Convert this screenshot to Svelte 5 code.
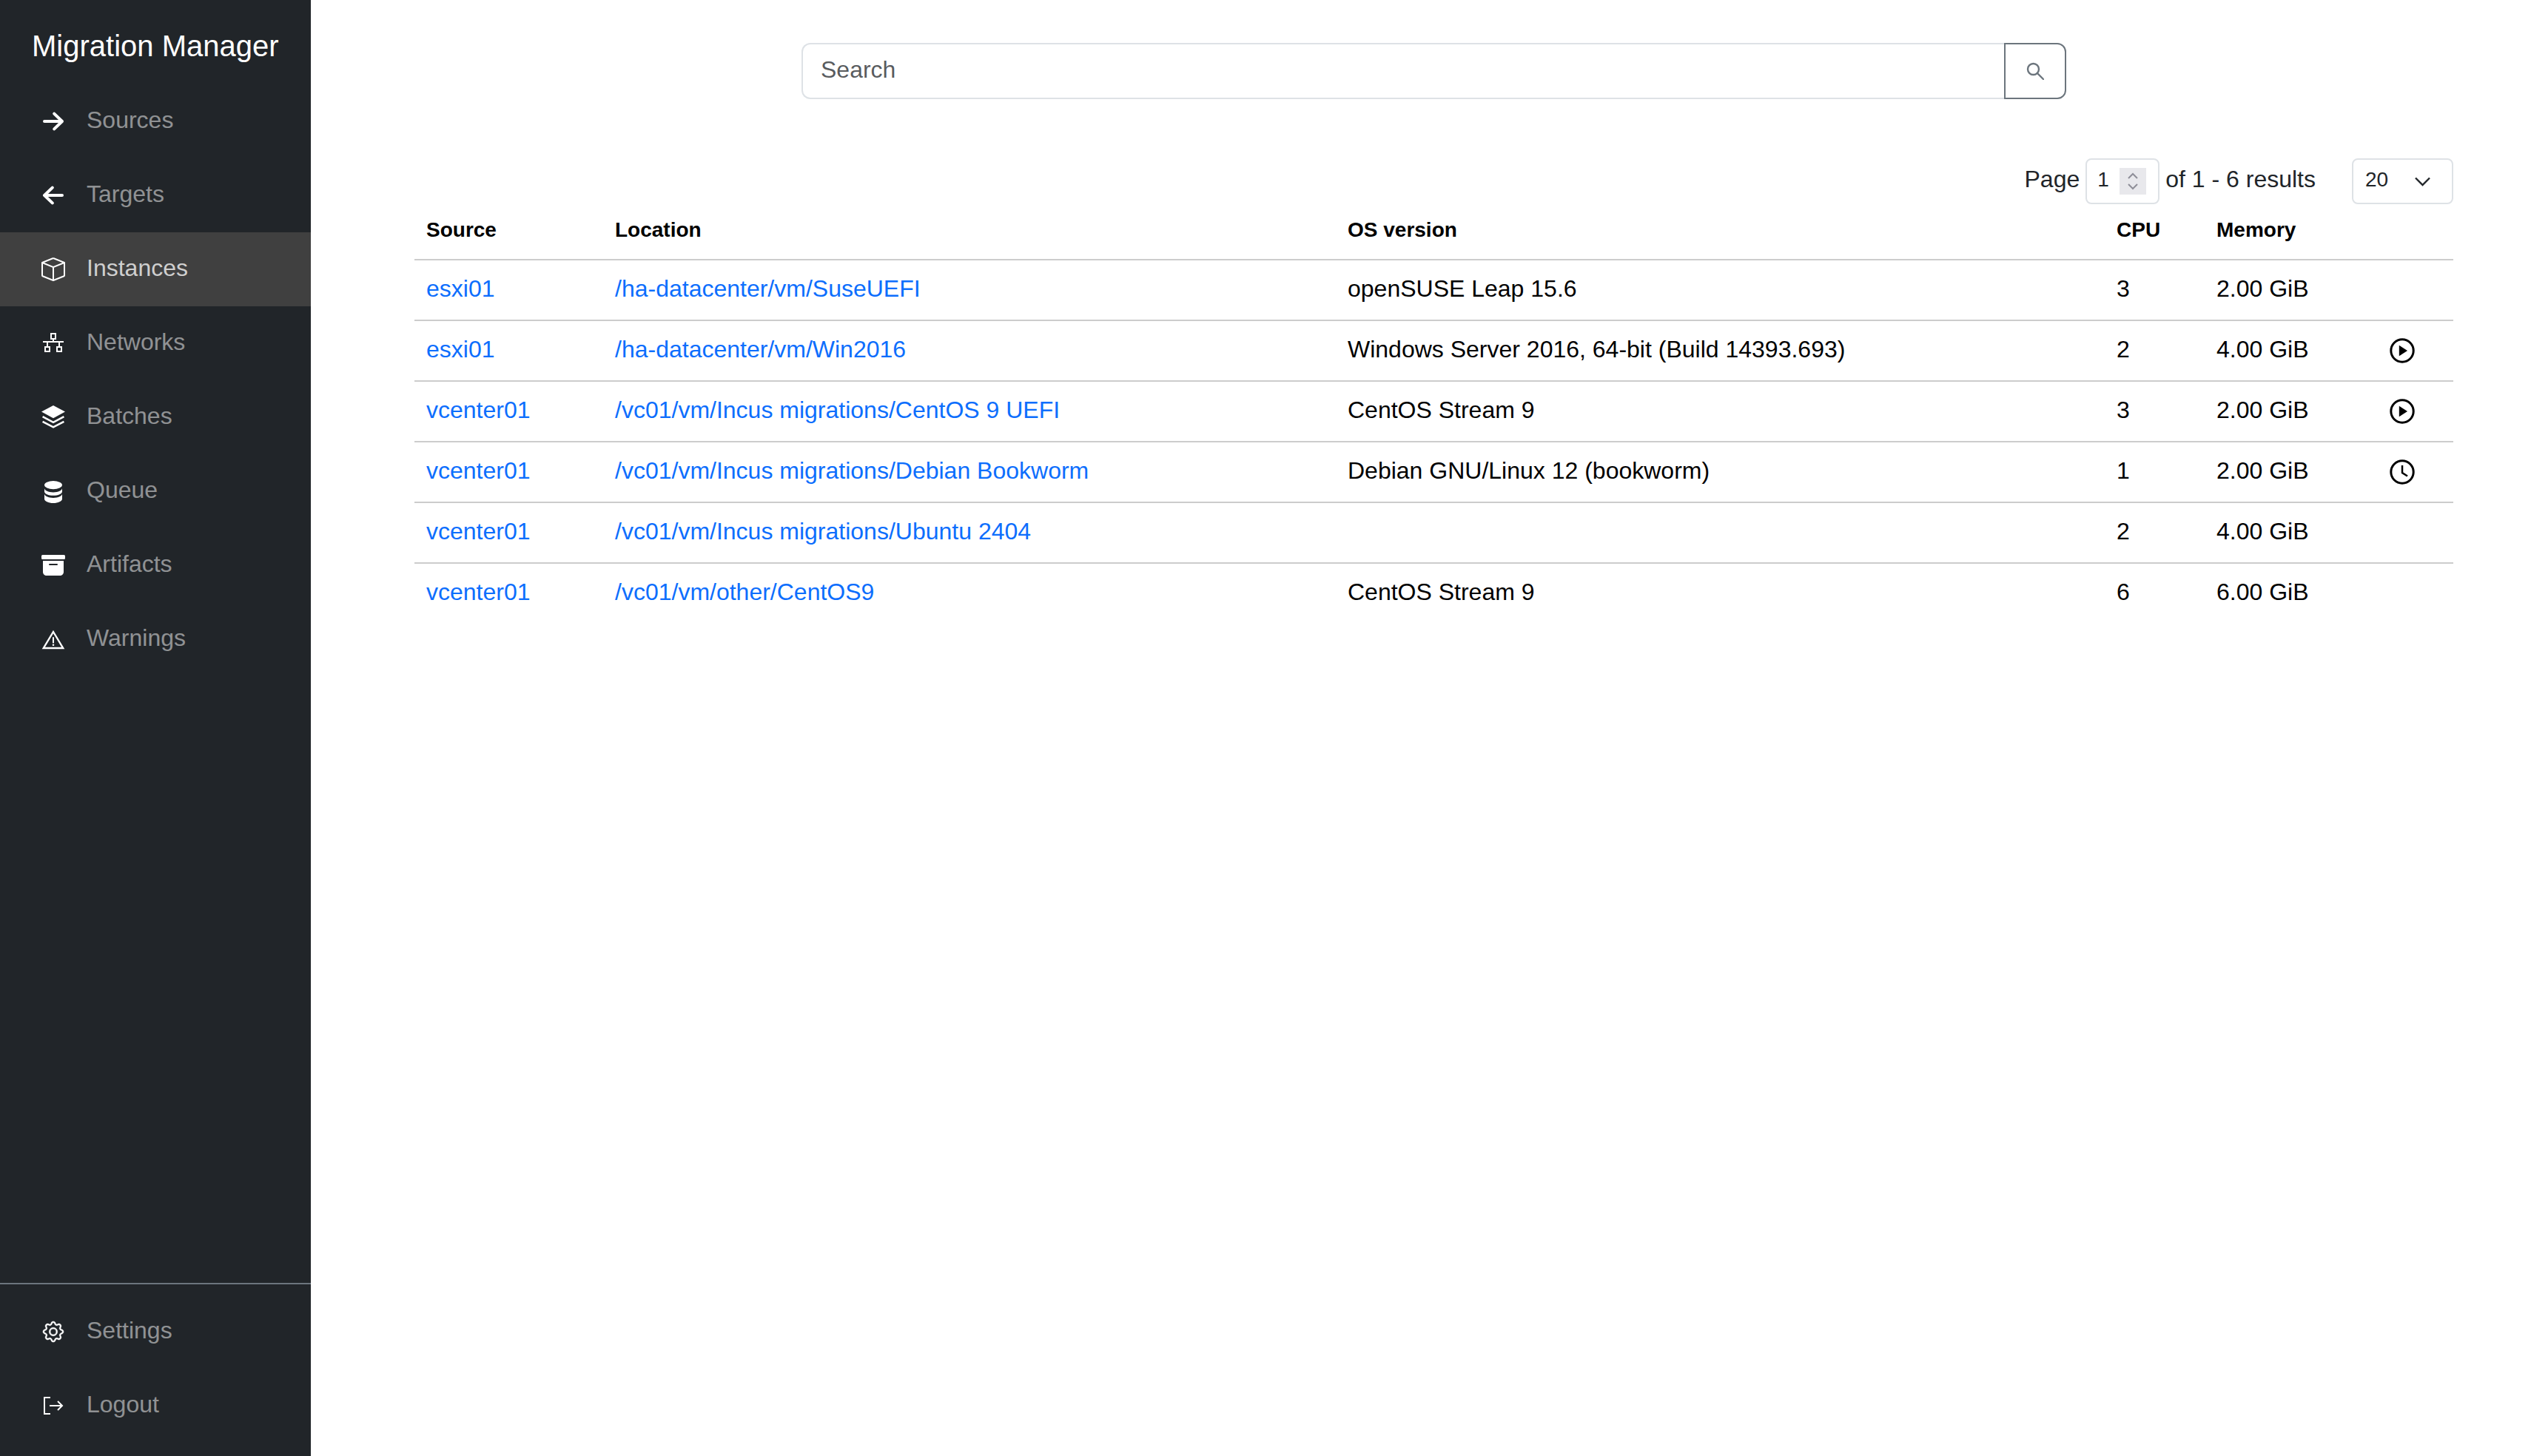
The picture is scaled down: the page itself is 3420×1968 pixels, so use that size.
<script lang="ts">
  const mainNav = [
    { label: 'Sources', icon: 'right' },
    { label: 'Targets', icon: 'left' },
    { label: 'Instances', icon: 'box', active: true },
    { label: 'Networks', icon: 'net' },
    { label: 'Batches', icon: 'layers' },
    { label: 'Queue', icon: 'db' },
    { label: 'Artifacts', icon: 'archive' },
    { label: 'Warnings', icon: 'warn' }
  ];
  const bottomNav = [
    { label: 'Settings', icon: 'gear' },
    { label: 'Logout', icon: 'logout' }
  ];
  const rows = [
    { source: 'esxi01', location: '/ha-datacenter/vm/SuseUEFI', os: 'openSUSE Leap 15.6', cpu: 3, mem: '2.00 GiB', action: '' },
    { source: 'esxi01', location: '/ha-datacenter/vm/Win2016', os: 'Windows Server 2016, 64-bit (Build 14393.693)', cpu: 2, mem: '4.00 GiB', action: 'play' },
    { source: 'vcenter01', location: '/vc01/vm/Incus migrations/CentOS 9 UEFI', os: 'CentOS Stream 9', cpu: 3, mem: '2.00 GiB', action: 'play' },
    { source: 'vcenter01', location: '/vc01/vm/Incus migrations/Debian Bookworm', os: 'Debian GNU/Linux 12 (bookworm)', cpu: 1, mem: '2.00 GiB', action: 'clock' },
    { source: 'vcenter01', location: '/vc01/vm/Incus migrations/Ubuntu 2404', os: '', cpu: 2, mem: '4.00 GiB', action: '' },
    { source: 'vcenter01', location: '/vc01/vm/other/CentOS9', os: 'CentOS Stream 9', cpu: 6, mem: '6.00 GiB', action: '' }
  ];
</script>

{#snippet navIcon(name: string)}
  <svg class="nav-icon" viewBox="0 0 16 16" fill="currentColor">
    {#if name === 'right'}
      <path d="M2 8H14M8.600 2.800 14 8l-5.400 5.200" fill="none" stroke="currentColor" stroke-width="2" stroke-linecap="round" stroke-linejoin="round"/>
    {:else if name === 'left'}
      <path d="M14 8H2M7.400 2.800 2 8l5.400 5.200" fill="none" stroke="currentColor" stroke-width="2" stroke-linecap="round" stroke-linejoin="round"/>
    {:else if name === 'box'}
      <path d="M8.186 1.113a.5.5 0 0 0-.372 0L1.846 3.5 8 5.961 14.154 3.5zM15 4.239l-6.500 2.600v7.922l6.500-2.600V4.240zM7.500 14.762V6.838L1 4.239v7.925zM7.443.184a1.500 1.500 0 0 1 1.114 0l7.129 2.852A.5.5 0 0 1 16 3.500v8.662a1 1 0 0 1-.629.928l-7.185 2.874a.5.5 0 0 1-.372 0L.63 13.090a1 1 0 0 1-.63-.928V3.500a.5.5 0 0 1 .314-.464z"/>
    {:else if name === 'net'}
      <path d="M6.500 1.500h3V5h-3zM8 5v2M1 7h14M4 7v3M12 7v3M2.500 10.500h3v3h-3zM10.500 10.500h3v3h-3z" fill="none" stroke="currentColor" stroke-width="1"/>
    {:else if name === 'layers'}
      <path d="M8 0 16 4.300 8 8.600 0 4.300z"/>
      <path d="M.8 7.600 8 11.400l7.200-3.800M.8 10.900 8 14.700l7.200-3.800" fill="none" stroke="currentColor" stroke-width="1.300"/>
    {:else if name === 'db'}
      <ellipse cx="8" cy="3.800" rx="6" ry="2.800"/>
      <path d="M2 6c0 1.500 2.700 2.700 6 2.700s6-1.200 6-2.700v2.200c0 1.500-2.700 2.700-6 2.700S2 9.700 2 8.200z"/>
      <path d="M2 9.800c0 1.500 2.700 2.700 6 2.700s6-1.200 6-2.700v3.300c0 1.600-2.700 2.900-6 2.900s-6-1.300-6-2.900z"/>
    {:else if name === 'archive'}
      <path d="M12.643 15C13.979 15 15 13.845 15 12.500V5H1v7.500C1 13.845 2.021 15 3.357 15zM5.500 7h5a.5.5 0 0 1 0 1h-5a.5.5 0 0 1 0-1M.8 1a.8.8 0 0 0-.8.8v1.400a.8.8 0 0 0 .8.8h14.400a.8.8 0 0 0 .8-.8V1.800a.8.8 0 0 0-.8-.8z"/>
    {:else if name === 'warn'}
      <path d="M8 3 14.600 14H1.400z" fill="none" stroke="currentColor" stroke-width="1.200"/>
      <path d="M7.500 6.600h1v4h-1z"/>
      <circle cx="8" cy="11.900" r=".65"/>
    {:else if name === 'gear'}
      <g transform="translate(1 1) scale(.875)" stroke="currentColor" stroke-width=".3">
        <path d="M8 4.754a3.246 3.246 0 1 0 0 6.492 3.246 3.246 0 0 0 0-6.492M5.754 8a2.246 2.246 0 1 1 4.492 0 2.246 2.246 0 0 1-4.492 0"/>
        <path d="M9.796 1.343c-.527-1.790-3.065-1.790-3.592 0l-.094.319a.873.873 0 0 1-1.255.52l-.292-.16c-1.640-.892-3.433.902-2.540 2.541l.159.292a.873.873 0 0 1-.52 1.255l-.319.094c-1.790.527-1.790 3.065 0 3.592l.319.094a.873.873 0 0 1 .52 1.255l-.16.292c-.892 1.640.901 3.434 2.541 2.540l.292-.159a.873.873 0 0 1 1.255.52l.094.319c.527 1.790 3.065 1.790 3.592 0l.094-.319a.873.873 0 0 1 1.255-.52l.292.16c1.640.893 3.434-.902 2.540-2.541l-.159-.292a.873.873 0 0 1 .52-1.255l.319-.094c1.790-.527 1.790-3.065 0-3.592l-.319-.094a.873.873 0 0 1-.52-1.255l.16-.292c.893-1.640-.902-3.433-2.541-2.540l-.292.159a.873.873 0 0 1-1.255-.52zm-2.633.283c.246-.835 1.428-.835 1.674 0l.094.319a1.873 1.873 0 0 0 2.693 1.115l.291-.16c.764-.415 1.600.42 1.184 1.185l-.159.292a1.873 1.873 0 0 0 1.116 2.692l.318.094c.835.246.835 1.428 0 1.674l-.319.094a1.873 1.873 0 0 0-1.115 2.693l.16.291c.415.764-.42 1.600-1.185 1.184l-.291-.159a1.873 1.873 0 0 0-2.693 1.116l-.094.318c-.246.835-1.428.835-1.674 0l-.094-.319a1.873 1.873 0 0 0-2.692-1.115l-.292.16c-.764.415-1.600-.42-1.184-1.185l.159-.291A1.873 1.873 0 0 0 1.945 8.930l-.319-.094c-.835-.246-.835-1.428 0-1.674l.319-.094A1.873 1.873 0 0 0 3.060 4.377l-.16-.292c-.415-.764.42-1.600 1.185-1.184l.292.159a1.873 1.873 0 0 0 2.692-1.115z"/>
      </g>
    {:else if name === 'logout'}
      <path d="M6 2.500H2V13.500H6M5.500 8H14M11 5l3 3-3 3" fill="none" stroke="currentColor" stroke-width="1"/>
    {/if}
  </svg>
{/snippet}

{#snippet navItem(item: { label: string; icon: string; active?: boolean })}
  <a class="nav-link" class:active={item.active} href="#{item.label.toLowerCase()}">
    {@render navIcon(item.icon)}
    <span>{item.label}</span>
  </a>
{/snippet}

<div class="layout">
  <aside class="sidebar">
    <div class="brand">Migration Manager</div>
    <nav class="nav-main">
      {#each mainNav as item}
        {@render navItem(item)}
      {/each}
    </nav>
    <nav class="nav-bottom">
      {#each bottomNav as item}
        {@render navItem(item)}
      {/each}
    </nav>
  </aside>

  <main class="content">
    <form class="search">
      <input class="search-input" type="text" placeholder="Search" />
      <button class="search-btn" type="button" aria-label="Search">
        <svg width="24" height="24" viewBox="0 0 24 24" fill="none" stroke="currentColor" stroke-width="2.400">
          <circle cx="9.500" cy="9.500" r="7.500"/>
          <path d="M15 15l8 8" stroke-linecap="round"/>
        </svg>
      </button>
    </form>

    <div class="pager">
      <span class="pager-text">Page</span>
      <div class="page-box">
        <span>1</span>
        <span class="spinner">
          <svg width="16" height="28" viewBox="0 0 16 28" fill="none" stroke="currentColor" stroke-width="2">
            <path d="M2 10l6-6 6 6M2 18l6 6 6-6"/>
          </svg>
        </span>
      </div>
      <span class="pager-text">of 1 - 6 results</span>
      <div class="per-page">
        <span>20</span>
        <svg width="21" height="13" viewBox="0 0 21 13" fill="none" stroke="currentColor" stroke-width="2.400">
          <path d="M1 1.500 10.500 11 20 1.500"/>
        </svg>
      </div>
    </div>

    <table class="instances">
      <thead>
        <tr>
          <th class="c-source">Source</th>
          <th class="c-location">Location</th>
          <th class="c-os">OS version</th>
          <th class="c-cpu">CPU</th>
          <th class="c-mem">Memory</th>
          <th class="c-action"></th>
        </tr>
      </thead>
      <tbody>
        {#each rows as row}
          <tr>
            <td><a href="#source">{row.source}</a></td>
            <td><a href="#location">{row.location}</a></td>
            <td>{row.os}</td>
            <td>{row.cpu}</td>
            <td>{row.mem}</td>
            <td class="action">
              {#if row.action === 'play'}
                <svg width="34" height="34" viewBox="0 0 34 34">
                  <circle cx="17" cy="17" r="15.200" fill="none" stroke="currentColor" stroke-width="3"/>
                  <path d="M12.800 9.800 24 17l-11.200 7.200z" fill="currentColor"/>
                </svg>
              {:else if row.action === 'clock'}
                <svg width="34" height="34" viewBox="0 0 34 34" fill="none" stroke="currentColor">
                  <circle cx="17" cy="17" r="15.200" stroke-width="3"/>
                  <path d="M17 8v10l7 4.500" stroke-width="2.500"/>
                </svg>
              {/if}
            </td>
          </tr>
        {/each}
      </tbody>
    </table>
  </main>
</div>

<style>
  :global(body) {
    margin: 0;
    font-family: "Liberation Sans", Arial, sans-serif;
    background: #fff;
  }

  .layout {
    display: flex;
    height: 1968px;
    overflow: hidden;
  }

  .sidebar {
    flex: 0 0 420px;
    display: flex;
    flex-direction: column;
    background: #212529;
  }

  .brand {
    height: 114px;
    padding: 38px 0 0 43px;
    box-sizing: border-box;
    color: #fff;
    font-size: 40px;
    line-height: 48px;
  }

  .nav-main {
    flex: 1;
  }

  .nav-bottom {
    border-top: 2px solid #6c757d;
    padding: 14px 0 18px;
  }

  .nav-link {
    display: flex;
    align-items: center;
    gap: 29px;
    height: 100px;
    padding-left: 56px;
    color: rgba(255, 255, 255, 0.5);
    font-size: 32px;
    text-decoration: none;
  }

  .nav-link span {
    padding-bottom: 4px;
  }

  .nav-link.active {
    background: #404040;
    color: rgba(255, 255, 255, 0.75);
  }

  .nav-icon {
    width: 32px;
    height: 32px;
    flex: none;
    color: #fff;
  }

  .content {
    flex: 1;
    min-width: 0;
    padding: 58px 105px 0 140px;
    color: #212529;
  }

  .search {
    display: flex;
    width: 1709px;
    height: 76px;
    margin: 0 auto;
  }

  .search-input {
    flex: 1;
    min-width: 0;
    padding: 0 24px 4px;
    border: 2px solid #dee2e6;
    border-right: none;
    border-radius: 12px 0 0 12px;
    font: 32px "Liberation Sans", Arial, sans-serif;
    color: #212529;
    outline: none;
  }

  .search-input::placeholder {
    color: rgba(33, 37, 41, 0.75);
  }

  .search-btn {
    width: 84px;
    display: flex;
    align-items: center;
    justify-content: center;
    padding: 0;
    background: #fff;
    border: 2px solid #6c757d;
    border-radius: 0 12px 12px 0;
    color: #6c757d;
  }

  .pager {
    display: flex;
    justify-content: flex-end;
    align-items: center;
    gap: 8px;
    height: 62px;
    margin-top: 80px;
    font-size: 32px;
  }

  .pager-text {
    padding-bottom: 6px;
  }

  .page-box,
  .per-page {
    display: flex;
    align-items: center;
    box-sizing: border-box;
    height: 62px;
    border: 2px solid #dee2e6;
    border-radius: 8px;
    font-size: 28px;
  }

  .page-box span:first-child,
  .per-page span {
    padding-bottom: 4px;
  }

  .page-box {
    width: 100px;
    padding: 0 16px 0 14px;
    justify-content: space-between;
  }

  .spinner {
    display: flex;
    align-items: center;
    justify-content: center;
    width: 36px;
    height: 36px;
    background: #e8e8ec;
    color: #8e8e98;
  }

  .per-page {
    width: 137px;
    margin-left: 41px;
    padding: 0 29px 0 16px;
    justify-content: space-between;
  }

  .instances {
    width: 2755px;
    table-layout: fixed;
    border-collapse: collapse;
    color: #000;
  }

  .instances th,
  .instances td {
    box-sizing: border-box;
    padding: 14px 16px 18px;
    text-align: left;
    line-height: 48px;
    font-size: 32px;
  }

  .instances th {
    font-size: 28px;
    line-height: 42px;
    border-bottom: 2px solid #ccc;
  }

  .instances tbody tr:not(:last-child) td {
    border-bottom: 2px solid #ccc;
  }

  .instances a {
    color: #0d6efd;
    text-decoration: none;
  }

  .c-source { width: 255px; }
  .c-location { width: 990px; }
  .c-os { width: 1039px; }
  .c-cpu { width: 135px; }
  .c-mem { width: 234px; }
  .c-action { width: 102px; }

  .instances .action {
    padding-top: 0;
    padding-bottom: 0;
    line-height: 0;
    vertical-align: middle;
  }
</style>
